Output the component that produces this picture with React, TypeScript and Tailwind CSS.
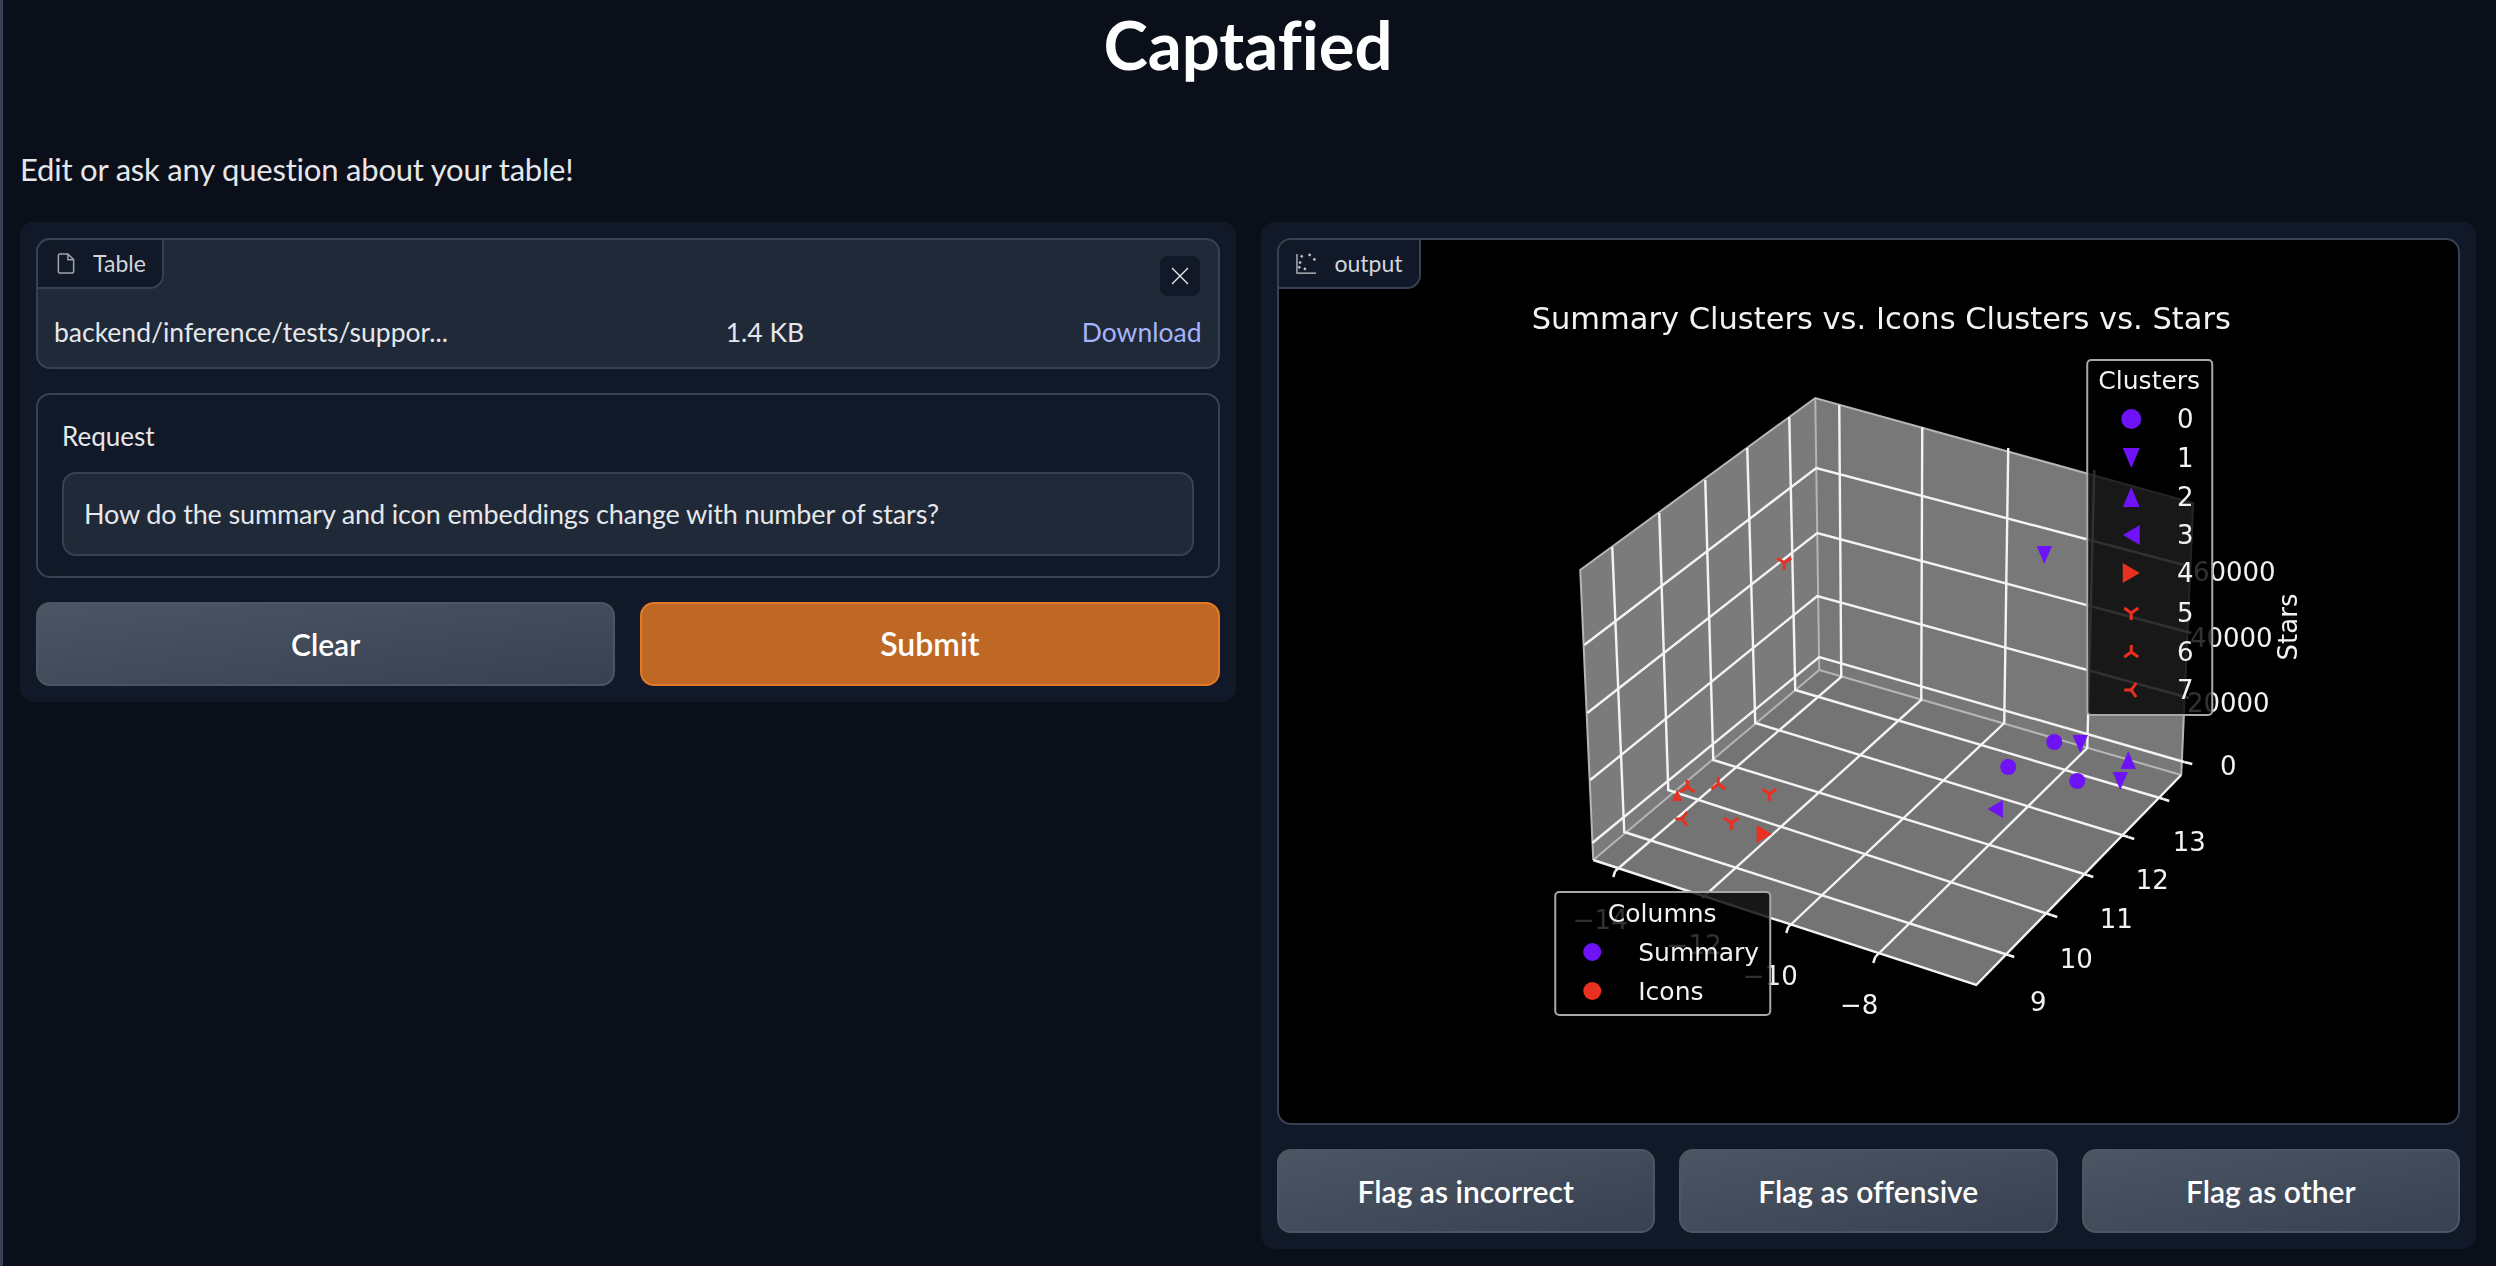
import { ReactNode } from 'react';

const PURPLE = '#6e13f6';
const RED = '#ea3020';
const TICK = '#f2f2f2';
const DEJAVU = "'DejaVu Sans', sans-serif";

// grid lines on the 3d plot, traced as [x1, y1, x2, y2, x3, y3] in page pixels
const zLines = [
  [1584, 645, 1816, 468, 2184, 565],
  [1587, 713, 1817, 533, 2191, 633],
  [1590, 780, 1817, 596, 2189, 698],
  [1592, 843, 1819, 657, 2184, 762],
];
const yLines = [
  [1612, 547, 1624, 832, 2008, 955],
  [1659, 513, 1668, 790, 2051, 915],
  [1705, 480, 1713, 760, 2087, 875],
  [1747, 448, 1755, 723, 2128, 837],
  [1789, 417, 1795, 690, 2163, 799],
];
const xLines = [
  [1839, 405, 1841, 677, 1615, 871],
  [1922, 427, 1921, 700, 1702, 898],
  [2008, 448, 2004, 723, 1788, 927],
  [2094, 470, 2087, 748, 1875, 957],
];

type Shape = 'o' | 'v' | '^' | '<' | '>' | '1' | '2' | '3';

const points: [Shape, string, number, number, number][] = [
  ['v', PURPLE, 2044, 555, 9],
  ['o', PURPLE, 2054, 742, 8],
  ['v', PURPLE, 2080, 744, 9],
  ['^', PURPLE, 2128, 760, 9],
  ['o', PURPLE, 2008, 767, 8],
  ['o', PURPLE, 2077, 781, 8],
  ['v', PURPLE, 2120, 781, 9],
  ['<', PURPLE, 1995, 809, 9],
  ['1', RED, 1784, 563, 7],
  ['^', RED, 1677, 795, 6],
  ['2', RED, 1687, 787, 7],
  ['2', RED, 1718, 784, 7],
  ['1', RED, 1769, 794, 7],
  ['3', RED, 1682, 819, 7],
  ['1', RED, 1731, 823, 7],
  ['>', RED, 1764, 834, 9],
];

const Marker = ({ shape, color, x, y, r }: { shape: Shape; color: string; x: number; y: number; r: number }) => {
  if (shape === 'o') return <ellipse cx={x} cy={y} rx={r} ry={r} fill={color} />;
  if (shape === 'v') return <polygon points={`${x - r * 0.85},${y - r} ${x + r * 0.85},${y - r} ${x},${y + r}`} fill={color} />;
  if (shape === '^') return <polygon points={`${x - r * 0.85},${y + r} ${x + r * 0.85},${y + r} ${x},${y - r}`} fill={color} />;
  if (shape === '<') return <polygon points={`${x + r * 0.85},${y - r} ${x + r * 0.85},${y + r} ${x - r * 0.85},${y}`} fill={color} />;
  if (shape === '>') return <polygon points={`${x - r * 0.85},${y - r} ${x - r * 0.85},${y + r} ${x + r * 0.85},${y}`} fill={color} />;
  // the tri markers are three short strokes from the centre
  const arms: Record<string, number[][]> = {
    '1': [[0, r], [-r, -r * 0.7], [r, -r * 0.7]],
    '2': [[0, -r], [-r, r * 0.7], [r, r * 0.7]],
    '3': [[-r, 0], [r * 0.7, -r], [r * 0.7, r]],
  };
  return (
    <g stroke={color} strokeWidth={3} fill="none">
      {arms[shape].map(([dx, dy], i) => (
        <line key={i} x1={x} y1={y} x2={x + dx} y2={y + dy} />
      ))}
    </g>
  );
};

const Tick = ({ x, y, children, size = 26 }: { x: number; y: number; children: ReactNode; size?: number }) => (
  <text x={x} y={y + 9} fontSize={size} fill={TICK} textAnchor="middle" fontFamily={DEJAVU}>
    {children}
  </text>
);

const Plot = () => (
  <svg viewBox="1279 240 1179 883" className="block w-full h-full blur-[0.7px]">
    <text x={1881} y={329} fontSize={30.500} fill={TICK} textAnchor="middle" fontFamily={DEJAVU}>
      Summary Clusters vs. Icons Clusters vs. Stars
    </text>

    {/* panes */}
    <polygon points="1815,398 1580,570 1593,860 1819,670" fill="#7b7b7b" />
    <polygon points="1815,398 2193,503 2181,775 1819,670" fill="#787878" />
    <polygon points="1819,670 2181,775 1976,985 1593,860" fill="#747474" />
    <g fill="none" stroke="#b5b5b5" strokeWidth={2}>
      <polyline points="1593,860 1580,570 1815,398 2193,503 2181,775" />
      <polyline points="1815,398 1819,670 1593,860" />
      <line x1={1819} y1={670} x2={2181} y2={775} />
    </g>

    <g fill="none" stroke="#f4f4f4" strokeWidth={2.4}>
      {[...zLines, ...yLines, ...xLines].map((l, i) => (
        <polyline key={i} points={`${l[0]},${l[1]} ${l[2]},${l[3]} ${l[4]},${l[5]}`} />
      ))}
      <polyline points="1593,860 1976,985 2181,775" />
      {/* ticks */}
      <line x1={2008} y1={955} x2={2014} y2={957} />
      <line x1={2051} y1={915} x2={2057} y2={917} />
      <line x1={2087} y1={875} x2={2093} y2={877} />
      <line x1={2128} y1={837} x2={2134} y2={839} />
      <line x1={2163} y1={799} x2={2169} y2={801} />
      <line x1={2184} y1={762} x2={2192} y2={764} />
      <line x1={1875} y1={957} x2={1873} y2={963} />
      <line x1={1788} y1={927} x2={1786} y2={933} />
      <line x1={1615} y1={871} x2={1613} y2={877} />
    </g>

    {points.map(([shape, color, x, y, r], i) => (
      <Marker key={i} shape={shape} color={color} x={x} y={y} r={r} />
    ))}

    {/* axis labels */}
    <Tick x={2234} y={572}>60000</Tick>
    <Tick x={2231} y={638}>40000</Tick>
    <Tick x={2228} y={703}>20000</Tick>
    <Tick x={2228} y={766}>0</Tick>
    <Tick x={2189} y={842}>13</Tick>
    <Tick x={2152} y={880}>12</Tick>
    <Tick x={2116} y={919}>11</Tick>
    <Tick x={2076} y={959}>10</Tick>
    <Tick x={2038} y={1002}>9</Tick>
    <Tick x={1859} y={1005}>−8</Tick>
    <Tick x={1770} y={976}>−10</Tick>
    <Tick x={1600} y={920}>−14</Tick>
    <Tick x={1694} y={945}>−12</Tick>
    <text x={2288} y={636} fontSize={26} fill={TICK} textAnchor="middle" fontFamily={DEJAVU} transform="rotate(-90 2288 627)">
      Stars
    </text>

    {/* clusters legend */}
    <rect x={2087} y={360} width={125} height={355} rx={4} fill="#000" fillOpacity={0.8} stroke="#a8a8a8" strokeWidth={2} />
    <text x={2149} y={389} fontSize={25} fill={TICK} textAnchor="middle" fontFamily={DEJAVU}>Clusters</text>
    {([
      ['o', PURPLE, 419, '0'],
      ['v', PURPLE, 458, '1'],
      ['^', PURPLE, 497, '2'],
      ['<', PURPLE, 535, '3'],
      ['>', RED, 573, '4'],
      ['1', RED, 613, '5'],
      ['2', RED, 652, '6'],
      ['3', RED, 690, '7'],
    ] as [Shape, string, number, string][]).map(([shape, color, y, label]) => (
      <g key={label}>
        <Marker shape={shape} color={color} x={2131} y={y} r={shape === '1' || shape === '2' || shape === '3' ? 7 : 10} />
        <Tick x={2185} y={y}>{label}</Tick>
      </g>
    ))}

    {/* columns legend */}
    <rect x={1555} y={892} width={215} height={123} rx={4} fill="#000" fillOpacity={0.8} stroke="#a8a8a8" strokeWidth={2} />
    <text x={1662} y={922} fontSize={25} fill={TICK} textAnchor="middle" fontFamily={DEJAVU}>Columns</text>
    <ellipse cx={1592} cy={952} rx={9} ry={9} fill={PURPLE} />
    <text x={1638} y={961} fontSize={25} fill={TICK} fontFamily={DEJAVU}>Summary</text>
    <ellipse cx={1592} cy={991} rx={9} ry={9} fill={RED} />
    <text x={1638} y={1000} fontSize={25} fill={TICK} fontFamily={DEJAVU}>Icons</text>
  </svg>
);

const GrayButton = ({ children }: { children: ReactNode }) => (
  <button className="h-[84px] flex-1 rounded-[14px] border-2 border-[#4b5563] bg-gradient-to-br from-[#4b5563] to-[#374151] text-[30px] font-semibold text-white">
    {children}
  </button>
);

const BlockLabel = ({ icon, children }: { icon: ReactNode; children: ReactNode }) => (
  <div className="absolute -left-0.5 -top-0.5 flex h-[51px] items-center gap-[18px] rounded-tl-[14px] rounded-br-[14px] border-2 border-[#374151] bg-[#111827] pl-[17px] pr-4 text-[23px] text-[#d1d5db]">
    {icon}
    {children}
  </div>
);

export default function App() {
  return (
    <div className="h-[1266px] overflow-hidden border-l-[3px] border-[#374151] bg-[#0b0f19] pl-[17px] pr-5 [font-family:Lato,sans-serif] [font-variant-ligatures:none]">
      <h1 className="text-center text-[67px] leading-[88px] font-bold text-white">Captafied</h1>
      <p className="mt-[60px] text-[31px] leading-[42px] tracking-[-0.2px] text-[#e5e7eb]">Edit or ask any question about your table!</p>

      <div className="mt-8 grid grid-cols-2 items-start gap-[25px]">
        {/* left column */}
        <div className="flex flex-col gap-6 rounded-[14px] bg-[#111827] p-4">
          <div className="relative h-[131px] rounded-[14px] border-2 border-[#374151] bg-[#1f2937]">
            <BlockLabel
              icon={
                <svg viewBox="0 0 18 22" className="ml-0.5 h-[21px] w-[18px]" fill="none" stroke="#9ca3af" strokeWidth={1.6}>
                  <path d="M2.5 1h8.5l6 6v12.5a1.5 1.5 0 0 1-1.5 1.5h-13A1.5 1.5 0 0 1 1 19.500V2.500A1.500 1.500 0 0 1 2.500 1z" />
                  <path d="M11 1v6h6" />
                </svg>
              }
            >
              Table
            </BlockLabel>
            <button className="absolute right-[18px] top-4 flex h-10 w-10 items-center justify-center rounded-lg bg-[#111827]">
              <svg viewBox="0 0 20 20" className="h-5 w-5" stroke="#e5e7eb" strokeWidth={1.4}>
                <path d="M2 2l16 16M18 2L2 18" />
              </svg>
            </button>
            <div className="absolute inset-x-[16px] bottom-[15px] flex items-center justify-between text-[26.5px] leading-10">
              <span className="text-[#e5e7eb]">backend/inference/tests/suppor...</span>
              <span className="text-[#e5e7eb]">1.4 KB</span>
              <span className="text-[#a5b4fc]">Download</span>
            </div>
          </div>

          <div className="h-[185px] rounded-[14px] border-2 border-[#374151] px-6 pt-[23px]">
            <div className="text-[26px] leading-9 text-[#e5e7eb]">Request</div>
            <div className="mt-[18px] flex h-[84px] items-center rounded-[14px] border-2 border-[#374151] bg-[#1f2937] px-5 text-[27px] tracking-[-0.15px] text-[#e5e7eb]">
              How do the summary and icon embeddings change with number of stars?
            </div>
          </div>

          <div className="flex gap-[25px]">
            <GrayButton>Clear</GrayButton>
            <button className="h-[84px] flex-1 rounded-[14px] border-2 border-[#e07a28] bg-[#bf6826] text-[32px] font-semibold text-white">
              Submit
            </button>
          </div>
        </div>

        {/* right column */}
        <div className="flex flex-col gap-6 rounded-[14px] bg-[#111827] p-4">
          <div className="relative h-[887px] overflow-hidden rounded-[14px] border-2 border-[#374151] bg-black">
            <Plot />
            <BlockLabel
              icon={
                <svg viewBox="0 0 22 22" className="h-[21px] w-[21px]" fill="#c7cbd1" stroke="#c7cbd1">
                  <path d="M1 1v20h20" fill="none" strokeWidth={1.3} />
                  <circle cx={14.300} cy={2} r={1.200} strokeWidth={0.5} />
                  <circle cx={6} cy={3.500} r={1.200} strokeWidth={0.5} />
                  <circle cx={19.300} cy={6.700} r={1.200} strokeWidth={0.5} />
                  <circle cx={4.300} cy={10} r={1.200} strokeWidth={0.5} />
                  <circle cx={9.300} cy={16.700} r={1.200} strokeWidth={0.5} />
                  <circle cx={3.500} cy={15} r={1.200} strokeWidth={0.5} />
                </svg>
              }
            >
              output
            </BlockLabel>
          </div>
          <div className="flex gap-6">
            <GrayButton>Flag as incorrect</GrayButton>
            <GrayButton>Flag as offensive</GrayButton>
            <GrayButton>Flag as other</GrayButton>
          </div>
        </div>
      </div>
    </div>
  );
}
